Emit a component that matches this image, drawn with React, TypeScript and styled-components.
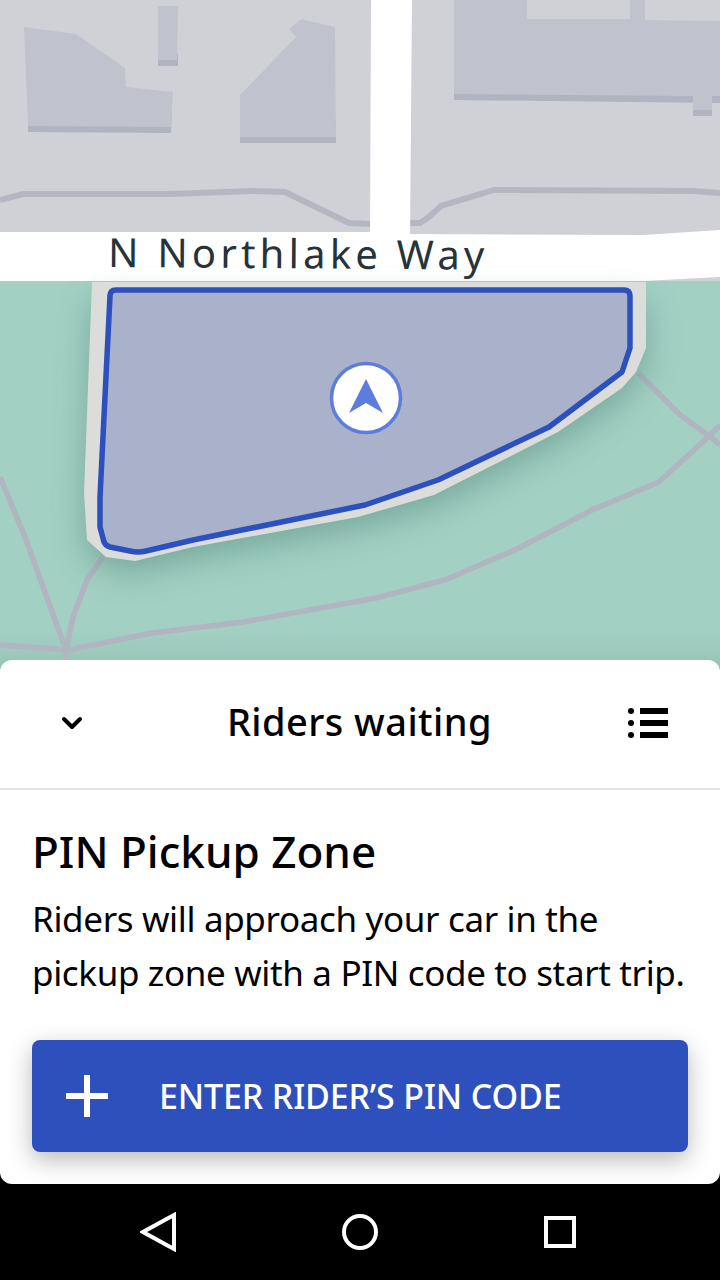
import React from "react"
import styled, { createGlobalStyle } from "styled-components"
import { ChevronDown } from "lucide-react"

const GlobalStyle = createGlobalStyle`
    html, body { margin: 0; padding: 0; background: #000; }
    * { box-sizing: border-box; }
`

const Screen = styled.div`
    width: 720px;
    height: 1280px;
    display: flex;
    flex-direction: column;
    overflow: hidden;
    background: #000;
    font-family: "Noto Sans", sans-serif;
    color: #000;
`

const MapArea = styled.div`
    height: 676px;
    flex: none;
    margin-bottom: -16px;
    line-height: 0;
`

const Sheet = styled.section`
    position: relative;
    flex: none;
    height: 524px;
    display: flex;
    flex-direction: column;
    background: #fff;
    border-radius: 12px;
    overflow: hidden;
`

const SheetHeader = styled.header`
    height: 130px;
    flex: none;
    display: flex;
    align-items: center;
    justify-content: space-between;
    padding: 0 52px 2px 56px;
    border-bottom: 2px solid #e3e3e3;
`

const HeaderTitle = styled.h2`
    margin: 0 0 4px 3px;
    font-size: 38px;
    font-weight: 500;
    letter-spacing: 0.45px;
    line-height: 48px;
`

const SheetBody = styled.div`
    flex: 1;
    display: flex;
    flex-direction: column;
    padding: 31px 32px 32px;
`

const Heading = styled.h1`
    margin: 0;
    font-size: 44px;
    font-weight: 500;
    line-height: 60px;
    letter-spacing: 0;
`

const Description = styled.p`
    margin: 11px 0 0 0;
    font-size: 35px;
    font-weight: 400;
    line-height: 54px;
    letter-spacing: -0.35px;
    white-space: nowrap;
`

const PinButton = styled.button`
    margin-top: 40px;
    height: 112px;
    flex: none;
    display: flex;
    align-items: center;
    gap: 51px;
    padding: 0 0 0 34px;
    border: 0;
    border-radius: 8px;
    background: #2d50bd;
    color: #fff;
    font-family: inherit;
    font-size: 34px;
    font-weight: 500;
    letter-spacing: -0.15px;
    box-shadow: 0 8px 24px rgba(0, 0, 0, 0.28);
`

const NavBar = styled.nav`
    flex: 1;
    display: flex;
    align-items: center;
    justify-content: space-between;
    padding: 0 144px 0 140px;
`

const RoadMap = () => (
    <svg width="720" height="676" viewBox="0 0 720 676">
        <defs>
            <filter id="zoneBlur" x="-20%" y="-20%" width="140%" height="140%">
                <feGaussianBlur stdDeviation="16" />
            </filter>
            <linearGradient id="mapFoot" x1="0" y1="0" x2="0" y2="1">
                <stop offset="0" stopColor="#000" stopOpacity="0" />
                <stop offset="1" stopColor="#000" stopOpacity="0.07" />
            </linearGradient>
        </defs>

        <rect width="720" height="676" fill="#d0d1d7" />

        <g fill="#b0b3c0">
            <polygon points="28,110 28,132 171,133 172,110" />
            <rect x="158" y="54" width="20" height="12" />
            <rect x="240" y="120" width="96" height="23" />
            <polygon points="454,80 454,100 720,103 720,80" />
            <rect x="693" y="96" width="19" height="20" />
        </g>
        <g fill="#c0c3ce">
            <polygon points="24,27 76,34 125,68 126,87 173,92 171,127 28,126" />
            <polygon points="158,6 178,6 177,60 158,60" />
            <polygon points="240,95 296,37 289,29 301,19 335,27 336,137 240,137" />
            <polygon points="454,0 527,0 527,19 630,19 630,0 645,0 645,20 720,21 720,96 712,96 712,110 693,110 693,96 454,94" />
        </g>

        <g fill="none" stroke="#b4b7c2" strokeWidth="6">
            <polyline points="0,200 23,194 170,194 252,191 285,192 349,223 372,224" />
            <polyline points="409,223 420,223 429,217 441,206 494,190 693,191 720,193" />
        </g>

        <polygon points="371,0 412,0 410,240 370,240" fill="#fff" />
        <polygon points="0,232 370,232 410,234 643,235 720,230 720,277 643,281 0,281" fill="#fff" />

        <rect y="281" width="720" height="395" fill="#a2d0c3" />
        <rect y="630" width="720" height="46" fill="url(#mapFoot)" />

        <g fill="none" stroke="#b0b5bf" strokeWidth="5.5">
            <polyline points="638,373 680,415 712,438 720,445" />
            <polyline points="720,425 707,438 659,482 592,510 519,548 445,580 376,598 243,622 152,633 69,650 0,645" />
            <polyline points="0,477 25,537 66,650 66,662" />
            <polyline points="103,557 87,580 73,617 66,650" />
        </g>

        <polygon
            points="84,493 87,540 106,557 135,561 193,547 358,517 434,495 558,432 622,388 636,372 646,348 646,290 92,290"
            fill="#5d8f84"
            opacity="0.6"
            filter="url(#zoneBlur)"
            transform="translate(0 12)"
        />
        <polygon
            points="92,282 646,282 646,348 636,372 622,388 558,432 434,495 358,517 193,547 135,561 106,557 87,540 84,493"
            fill="#dcdddb"
        />
        <path
            d="M110 296 Q110 290 116 290 L624 290 Q630 290 630 296 L630 348 L622 372 L549 427 L438 480 L365 505 L193 540 L146 551 Q138 553 130 551 L110 547 Q106 546 104 542 L100 527 L100 497 Z"
            fill="#a9b1cb"
            stroke="#2c50be"
            strokeWidth="5.5"
            strokeLinejoin="round"
        />

        <circle cx="366" cy="398" r="34.5" fill="#fff" stroke="#5d7ddc" strokeWidth="3.5" />
        <polygon points="366,379 383,413 366,403 349,413" fill="#5d7ddc" />

        <text
            x="108"
            y="267"
            transform="rotate(0.4 108 267)"
            fontFamily="'Noto Sans', sans-serif"
            fontSize="40"
            letterSpacing="4.2"
            fill="#26343a"
        >
            N Northlake Way
        </text>
    </svg>
)

const ListIcon = () => (
    <svg width="40" height="30" viewBox="0 0 40 30" fill="#000">
        <circle cx="3" cy="3" r="3" />
        <circle cx="3" cy="15" r="3" />
        <circle cx="3" cy="27" r="3" />
        <rect x="12" y="0" width="28" height="6" />
        <rect x="12" y="12" width="28" height="6" />
        <rect x="12" y="24" width="28" height="6" />
    </svg>
)

const PlusIcon = () => (
    <svg width="42" height="42" viewBox="0 0 42 42" fill="#fff">
        <rect x="18" y="0" width="6" height="42" />
        <rect x="0" y="18" width="42" height="6" />
    </svg>
)

const BackIcon = () => (
    <svg width="36" height="40" viewBox="0 0 36 40" fill="none" stroke="#fff" strokeWidth="4">
        <polygon points="34,3 34,37 3,20" />
    </svg>
)

const HomeIcon = () => (
    <svg width="36" height="36" viewBox="0 0 36 36" fill="none" stroke="#fff" strokeWidth="4">
        <circle cx="18" cy="18" r="16" />
    </svg>
)

const RecentsIcon = () => (
    <svg width="32" height="32" viewBox="0 0 32 32" fill="none" stroke="#fff" strokeWidth="4">
        <rect x="2" y="2" width="28" height="28" />
    </svg>
)

const App: React.FC = () => (
    <Screen>
        <GlobalStyle />
        <MapArea>
            <RoadMap />
        </MapArea>
        <Sheet>
            <SheetHeader>
                <ChevronDown size={32} strokeWidth={3} color="#000" />
                <HeaderTitle>Riders waiting</HeaderTitle>
                <ListIcon />
            </SheetHeader>
            <SheetBody>
                <Heading>PIN Pickup Zone</Heading>
                <Description>
                    Riders will approach your car in the
                    <br />
                    pickup zone with a PIN code to start trip.
                </Description>
                <PinButton>
                    <PlusIcon />
                    ENTER RIDER’S PIN CODE
                </PinButton>
            </SheetBody>
        </Sheet>
        <NavBar>
            <BackIcon />
            <HomeIcon />
            <RecentsIcon />
        </NavBar>
    </Screen>
)

export default App
